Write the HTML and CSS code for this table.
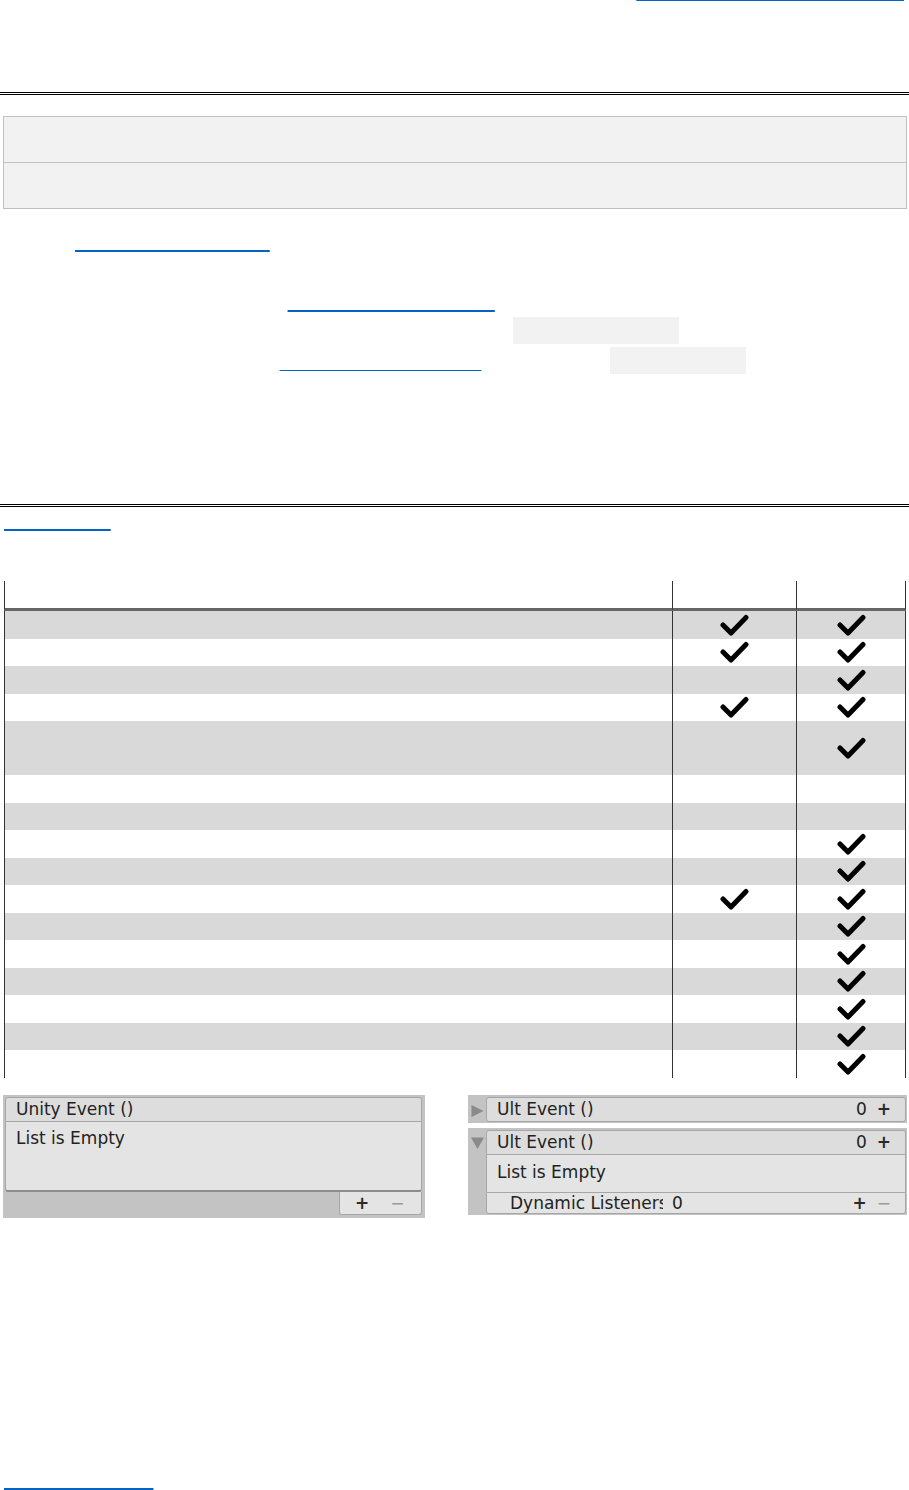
FILE: index.html
```html
<!DOCTYPE html>
<html lang="en">
<head>
<meta charset="utf-8">
<title>UltEvents</title>
<link rel="stylesheet" href="styles.css">
</head>
<body>
<p class="lead">UltEvents is a simple system for configuring events in the Unity Inspector. Learn more on <a href="#">https://kybernetik.com.au/ultevents/v2</a></p>

<h2 class="sec sec-a">Download</h2>

<table class="dl">
  <tr><td>Unity Asset Store: UltEvents (Free)</td></tr>
  <tr><td>GitHub: Releases and Source Code</td></tr>
</table>

<ol class="steps">
  <li>Buy <a href="#" class="l1">the Unity Asset Store listing</a> or get the free version from GitHub.</li>
  <li>Import the UltEvents package into your Unity project.</li>
  <li>Add public UltEvent field following <a href="#" class="l2">the Getting Started examples</a>.<br>In your MonoBehaviour script, you can just declare a field such as <code>UltEvent onClick</code>.<br>and afterwards, as was shown in <a href="#" class="thin">the page on Invoking Events</a>, we can then call <code>Invoke(value)</code>.</li>
</ol>

<p class="note">Any method can then be assigned to the event in the Inspector.</p>

<h2 class="sec sec-b">Comparison</h2>

<p class="toc"><a href="#">Event Systems</a></p>

<table class="cmp">
  <thead>
    <tr><th class="c1">Feature</th><th class="c2">UnityEvent</th><th class="c3">UltEvent</th></tr>
  </thead>
  <tbody>
    <tr><td>Serialized persistent listeners configured in the Inspector</td><td class="c"><svg class="chk"><use href="#chk"/></svg></td><td class="c"><svg class="chk"><use href="#chk"/></svg></td></tr>
    <tr><td>Dynamic listeners added at runtime</td><td class="c"><svg class="chk"><use href="#chk"/></svg></td><td class="c"><svg class="chk"><use href="#chk"/></svg></td></tr>
    <tr><td>Static methods</td><td class="c"></td><td class="c"><svg class="chk"><use href="#chk"/></svg></td></tr>
    <tr><td>Methods with one parameter</td><td class="c"><svg class="chk"><use href="#chk"/></svg></td><td class="c"><svg class="chk"><use href="#chk"/></svg></td></tr>
    <tr><td>Methods with multiple parameters, including any combination of parameter types, with the values either set in the Inspector or passed in by the code when the event is invoked</td><td class="c"></td><td class="c"><svg class="chk"><use href="#chk"/></svg></td></tr>
    <tr><td>Methods with non-void return values</td><td class="c"></td><td class="c"></td></tr>
    <tr><td>Generic methods</td><td class="c"></td><td class="c"></td></tr>
    <tr><td>Return values from one call used as parameters in another</td><td class="c"></td><td class="c"><svg class="chk"><use href="#chk"/></svg></td></tr>
    <tr><td>Properties with both get and set accessors</td><td class="c"></td><td class="c"><svg class="chk"><use href="#chk"/></svg></td></tr>
    <tr><td>Events with up to four dynamic parameters</td><td class="c"><svg class="chk"><use href="#chk"/></svg></td><td class="c"><svg class="chk"><use href="#chk"/></svg></td></tr>
    <tr><td>Inspector display of the number of listeners</td><td class="c"></td><td class="c"><svg class="chk"><use href="#chk"/></svg></td></tr>
    <tr><td>Collapsible Inspector drawer</td><td class="c"></td><td class="c"><svg class="chk"><use href="#chk"/></svg></td></tr>
    <tr><td>Drag and drop to reorder listeners</td><td class="c"></td><td class="c"><svg class="chk"><use href="#chk"/></svg></td></tr>
    <tr><td>Copy and paste individual listeners</td><td class="c"></td><td class="c"><svg class="chk"><use href="#chk"/></svg></td></tr>
    <tr><td>Context menu functions for each listener</td><td class="c"></td><td class="c"><svg class="chk"><use href="#chk"/></svg></td></tr>
    <tr><td>Minimal garbage allocation when invoking</td><td class="c"></td><td class="c"><svg class="chk"><use href="#chk"/></svg></td></tr>
  </tbody>
</table>

<div class="events">
  <div class="ue">
    <div class="ue-head">Unity Event ()</div>
    <div class="ue-body">List is Empty</div>
    <div class="ue-foot">
      <div class="ue-btns"><span class="plus">+</span><span class="minus">−</span></div>
    </div>
  </div>
  <div class="ult">
    <div class="ult-row">
      <svg class="tri" viewBox="0 0 13 12"><polygon points="0.5,0 12.5,6 0.5,12"/></svg>
      <div class="ult-box">
        <div class="ult-head"><span>Ult Event ()</span><span class="count">0</span><span class="plus">+</span></div>
      </div>
    </div>
    <div class="ult-row">
      <svg class="tri tri-down" viewBox="0 0 13 12"><polygon points="0,0.5 13,0.5 6.5,12"/></svg>
      <div class="ult-box open">
        <div class="ult-head"><span>Ult Event ()</span><span class="count">0</span><span class="plus">+</span></div>
        <div class="ult-body">List is Empty</div>
        <div class="ult-dyn"><span class="dyn-label">Dynamic Listeners</span><span class="dyn-count">0</span><span class="plus">+</span><span class="minus">−</span></div>
      </div>
    </div>
  </div>
</div>

<p class="caption">UnityEvent and UltEvent as they appear in the Inspector.</p>
<h3 class="sub">License</h3>
<p class="plain">UltEvents is free to use in any project.</p>
<p class="plain">Source code is included in the package.</p>
<p class="foot"><a href="#">Documentation Page</a></p>

<svg class="defs" width="0" height="0" aria-hidden="true">
  <symbol id="chk" viewBox="0 0 29 22">
    <path d="M3 11L11 19L26 3.5" fill="none" stroke="#000" stroke-width="5" stroke-linecap="round" stroke-linejoin="round"/>
  </symbol>
</svg>
</body>
</html>
```

FILE: styles.css
```css
html {
  background: #fff;
}

body {
  margin: 0;
  padding: 0 3px 0 4px;
  font: 16px/30px "Liberation Sans", Arial, sans-serif;
  color: transparent;
}

p {
  margin: 0;
}

a {
  color: transparent;
  text-decoration: underline;
  text-decoration-color: #0563c1;
  text-decoration-thickness: 2px;
  text-decoration-skip-ink: none;
}

a.thin {
  text-decoration-thickness: 1px;
}

.lead {
  margin-top: -22px;
  white-space: nowrap;
}

.sec {
  font-size: 24px;
  line-height: 30px;
  font-weight: bold;
  padding: 0 3px 6px 4px;
  border-bottom: 3px double #000;
}

.sec-a {
  margin: 48px -3px 21px -4px;
}

.sec-b {
  margin: 30px -3px 1px -4px;
}

.dl {
  width: calc(100% + 2px);
  margin: 0 -1px;
  border-collapse: collapse;
  background: #f2f2f2;
}

.dl td {
  border: 1px solid #c0c0c0;
  padding: 7px 10px 8px;
  line-height: 30px;
}

.steps {
  margin: 20px 0 0;
  padding-left: 39px;
}

code {
  font: 16px "Liberation Mono", monospace;
  background: #f2f2f2;
  padding: 9px 6px 0;
}

.note {
  margin-top: 29px;
}

.cmp {
  width: 100%;
  table-layout: fixed;
  border-collapse: separate;
  border-spacing: 0;
  margin-top: 43px;
}

.cmp th,
.cmp td {
  box-sizing: border-box;
  border-left: 1px solid #333;
  padding: 0.5px 6px;
  line-height: 26.5px;
  text-align: left;
  font-weight: normal;
}

.cmp th:last-child,
.cmp td:last-child {
  border-right: 1px solid #333;
}

.cmp th {
  border-bottom: 3px solid #666;
  padding: 0 6px;
  line-height: 27px;
}

.cmp .c1 { width: 668px; }
.cmp .c2 { width: 124px; }
.cmp .c3 { width: 110px; }

.cmp tbody tr:nth-child(odd) {
  background: #d9d9d9;
}

.cmp td.c {
  text-align: center;
  vertical-align: middle;
  padding: 0;
}

.chk {
  display: block;
  width: 29px;
  height: 22px;
  margin: 0 auto;
}

/* Inspector pictures */
.events {
  display: flex;
  align-items: flex-start;
  gap: 43px;
  margin: 17.5px -1px 0;
}

.ue {
  width: 422px;
  height: 123px;
  box-sizing: border-box;
  background: #c3c3c3;
  padding: 2px 3px 1px 2px;
  display: flex;
  flex-direction: column;
  font: 17px/25px "DejaVu Sans", Verdana, sans-serif;
  color: #222;
}

.ue-head {
  height: 25px;
  box-sizing: border-box;
  background: #dddddd;
  border: 1px solid #a6a6a6;
  border-radius: 3px 3px 0 0;
  padding-left: 10px;
  line-height: 23px;
}

.ue-body {
  height: 70px;
  box-sizing: border-box;
  background: #e4e4e4;
  border: 1px solid #a6a6a6;
  border-top: 0;
  border-bottom: 2px solid #8c8c8c;
  border-radius: 0 0 3px 3px;
  padding: 4px 10px 0;
}

.ue-foot {
  height: 25px;
  display: flex;
  justify-content: flex-end;
}

.ue-btns {
  width: 83px;
  height: 23px;
  box-sizing: border-box;
  background: #e4e4e4;
  border: 1px solid #a6a6a6;
  border-top: 0;
  border-radius: 0 0 3px 3px;
  display: flex;
  align-items: center;
  padding-left: 15px;
  line-height: 20px;
}

.plus {
  font-weight: bold;
  color: #2a2a2a;
}

.minus {
  color: #9a9a9a;
}

.ue-btns .minus {
  margin-left: 21px;
}

.ult {
  width: 439px;
  display: flex;
  flex-direction: column;
  gap: 5px;
  font: 17px "DejaVu Sans", Verdana, sans-serif;
  color: #222;
}

.ult-row {
  display: flex;
  background: #c3c3c3;
  padding: 2px 1px 1px 0;
}

.tri {
  flex: none;
  width: 13px;
  height: 12px;
  margin: 8px 2px 0 3px;
  fill: #8a8a8a;
}

.tri-down {
  margin-top: 7px;
}

.ult-box {
  flex: 1;
  min-width: 0;
}

.ult-head {
  height: 25px;
  box-sizing: border-box;
  display: flex;
  align-items: center;
  background: #dddddd;
  border: 1px solid #a6a6a6;
  border-radius: 3px;
  padding: 0 14px 0 10px;
  line-height: 23px;
}

.open .ult-head {
  border-radius: 3px 3px 0 0;
}

.ult-head .count {
  margin-left: auto;
}

.ult-head .plus {
  margin-left: 10px;
}

.ult-body {
  height: 37px;
  box-sizing: border-box;
  background: #e4e4e4;
  border: 1px solid #a6a6a6;
  border-top: 0;
  border-bottom: 0;
  padding: 5px 10px 0;
  line-height: 25px;
}

.ult-dyn {
  height: 22px;
  box-sizing: border-box;
  display: flex;
  align-items: center;
  background: #e4e4e4;
  border: 1px solid #a6a6a6;
  border-radius: 0 0 3px 3px;
  padding: 0 14px 0 23px;
  line-height: 20px;
}

.dyn-label {
  width: 153px;
  overflow: hidden;
  white-space: nowrap;
  flex: none;
}

.dyn-count {
  margin-left: 9px;
}

.ult-dyn .plus {
  margin-left: auto;
}

.ult-dyn .minus {
  margin-left: 10px;
}

.caption {
  margin-top: 24px;
}

.sub {
  font-size: 20px;
  line-height: 30px;
  margin: 40px 0 0;
}

.plain {
  margin-top: 20px;
}

.foot {
  margin-top: 24.5px;
}

.defs {
  display: block;
  width: 0;
  height: 0;
  overflow: hidden;
}
```
